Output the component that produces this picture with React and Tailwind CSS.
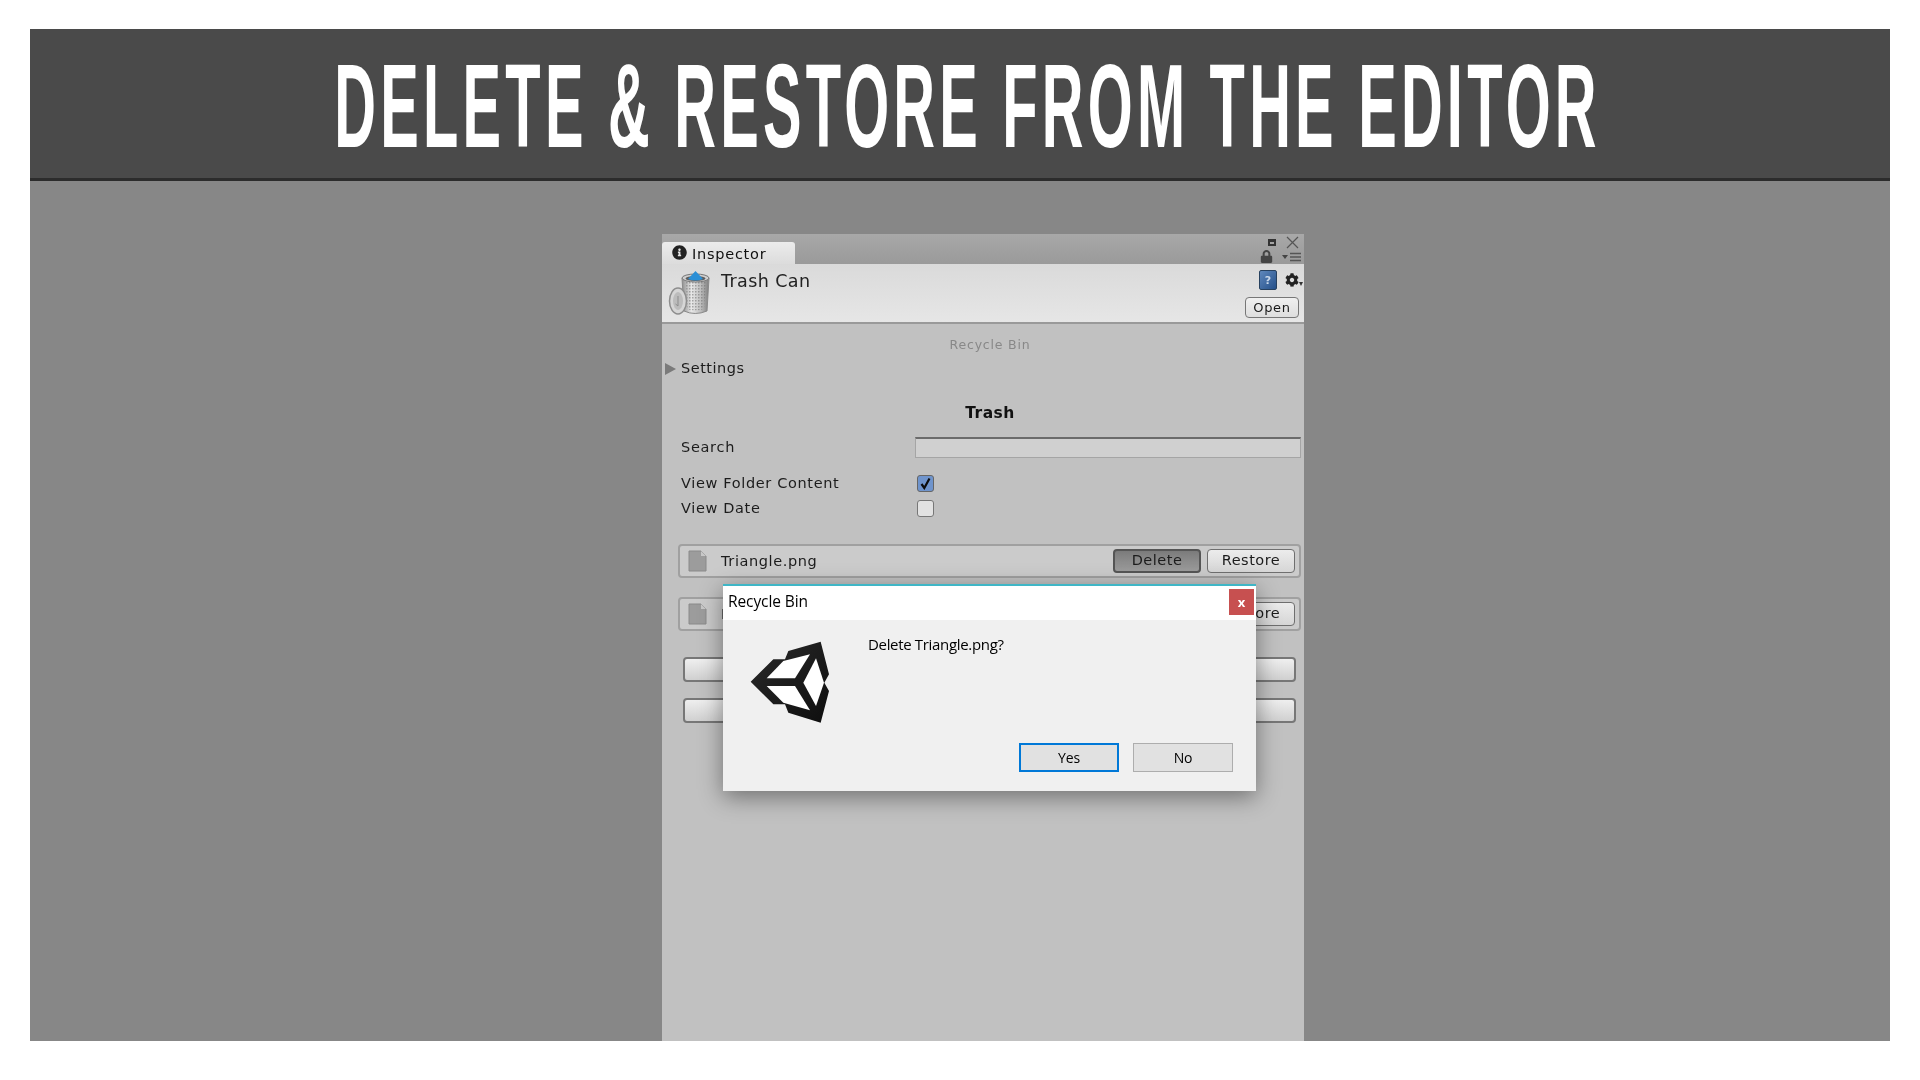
import React from "react";
import { FaCog, FaInfoCircle, FaLock } from "react-icons/fa";

const ui = "font-['DejaVu_Sans',sans-serif]";

function TrashIcon() {
  return (
    <svg width="44" height="46" viewBox="0 0 44 46" className="shrink-0">
      <defs>
        <linearGradient id="can" x1="0" x2="1" y1="0" y2="0">
          <stop offset="0" stopColor="#8f8f8f" />
          <stop offset="0.35" stopColor="#e8e8e8" />
          <stop offset="0.7" stopColor="#bdbdbd" />
          <stop offset="1" stopColor="#7d7d7d" />
        </linearGradient>
        <pattern id="mesh" width="3" height="3" patternUnits="userSpaceOnUse">
          <rect width="3" height="3" fill="none" />
          <rect width="1.5" height="1.5" fill="#6f6f6f" opacity="0.55" />
        </pattern>
      </defs>
      <path d="M14 8 L41 8 L39 41 Q27 46 16 41 Z" fill="url(#can)" stroke="#8a8a8a" />
      <path d="M18 12 L38 12 L36 39 Q27 42 19 39 Z" fill="url(#mesh)" />
      <ellipse cx="27.5" cy="8" rx="13.5" ry="4" fill="#cfcfcf" stroke="#777" />
      <ellipse cx="27.5" cy="8.5" rx="10" ry="2.6" fill="#5d5d5d" />
      <path d="M27.5 1 L35 9 Q27.5 12 20 9 Z" fill="#2b8fd6" />
      <ellipse cx="10" cy="31" rx="8.5" ry="13" fill="#d6d6d6" stroke="#8d8d8d" strokeWidth="1.5" />
      <ellipse cx="10" cy="31" rx="5" ry="9" fill="#bcbcbc" />
      <path d="M10 26 L10 36 L7.5 34" fill="none" stroke="#8d8d8d" />
    </svg>
  );
}

function FileIcon() {
  return (
    <svg width="19" height="22" viewBox="0 0 19 22" className="shrink-0">
      <path d="M1 1 H13 L18 6 V21 H1 Z" fill="#9c9c9c" stroke="#8a8a8a" />
      <path d="M13 1 L13 6 H18 Z" fill="#c8c8c8" />
    </svg>
  );
}

function UnityLogo() {
  return (
    <svg width="130" height="120" viewBox="0 0 390 360" className="shrink-0">
      <defs>
        <linearGradient id="ulogo" x1="0" x2="1" y1="0" y2="1">
          <stop offset="0" stopColor="#2a2a2a" />
          <stop offset="1" stopColor="#0e0e0e" />
        </linearGradient>
      </defs>
      <path
        d="M62 182 L130 115 L165 115 L175 90 L272 62 L297 160 L283 185 L297 210 L272 305 L175 275 L165 250 L130 250 Z"
        fill="url(#ulogo)"
      />
      <path d="M110 172 L195 172 L240 100 L160 120 Z" fill="#fff" />
      <path d="M220 185 L258 112 L282 185 L258 255 Z" fill="#fff" />
      <path d="M110 195 L195 195 L240 268 L160 245 Z" fill="#fff" />
    </svg>
  );
}

function UnityButton({ children, pressed }) {
  return (
    <div
      className={`flex h-[24px] w-[88px] items-center justify-center rounded-[4px] border text-[14.5px] tracking-[0.5px] text-[#1c1c1c] ${
        pressed
          ? "border-[#555] bg-gradient-to-b from-[#7b7b7b] to-[#9c9c9c] border-2"
          : "border-[#6f6f6f] bg-gradient-to-b from-[#ececec] to-[#d6d6d6]"
      }`}
    >
      {children}
    </div>
  );
}

function FileRow({ name, pressed, mt }) {
  return (
    <div
      className={`ml-[16px] flex h-[34px] w-[623px] items-center rounded-[4px] border-2 border-[#a0a0a0] bg-[#cbcbcb] pl-[8px] pr-[4px] ${mt}`}
    >
      <FileIcon />
      <span className="ml-[14px] mt-[1px] text-[14.5px] tracking-[0.6px] text-[#1c1c1c]">{name}</span>
      <div className="ml-auto flex gap-[6px]">
        <UnityButton pressed={pressed}>Delete</UnityButton>
        <UnityButton>Restore</UnityButton>
      </div>
    </div>
  );
}

function Dialog() {
  return (
    <div className="absolute left-[61px] top-[350px] flex h-[207px] w-[533px] flex-col border-t-2 border-[#3fb6c6] bg-[#f0f0f0] font-['Open_Sans',sans-serif] text-black shadow-[0_6px_22px_rgba(0,0,0,0.42)]">
      <div className="flex h-[34px] items-start justify-between bg-white">
        <span className="ml-[5px] mt-[3px] text-[15.5px] leading-[24px] tracking-[-0.1px]">Recycle Bin</span>
        <div className="mr-[2px] mt-[3px] flex h-[26px] w-[25px] items-center justify-center bg-[#c75050] text-[13px] font-bold leading-none text-white">
          x
        </div>
      </div>
      <div className="flex h-[123px]">
        <div className="ml-[7px] mt-[1px]">
          <UnityLogo />
        </div>
        <span className="ml-[8px] mt-[14px] text-[15px] leading-[20px] tracking-[-0.33px]">Delete Triangle.png?</span>
      </div>
      <div className="flex justify-end gap-[14px] pr-[23px] text-[14px] tracking-[-0.2px]">
        <div className="flex h-[29px] w-[100px] items-center justify-center border-2 border-[#0078d7] bg-[#e1e1e1]">Yes</div>
        <div className="flex h-[29px] w-[100px] items-center justify-center border border-[#adadad] bg-[#e1e1e1]">No</div>
      </div>
    </div>
  );
}

function Inspector() {
  return (
    <div className={`relative ml-[632px] flex h-[807px] w-[642px] flex-col bg-[#c1c1c1] blur-[0.45px] ${ui}`}>
      {/* tab strip */}
      <div className="flex h-[30px] items-end justify-between bg-gradient-to-b from-[#a8a8a8] to-[#9a9a9a]">
        <div className="flex h-[22px] w-[133px] items-center rounded-t-[3px] bg-gradient-to-b from-[#ececec] to-[#dcdcdc] pl-[10px]">
          <FaInfoCircle className="-mt-[2px] text-[15px] text-[#222]" />
          <span className="ml-[5px] mt-[4px] text-[14.5px] tracking-[0.75px] text-[#111]">Inspector</span>
        </div>
        <div className="mr-[3px] flex flex-col items-end pb-[1px]">
          <div className="flex items-center gap-[10px] pr-[2px]">
            <div className="h-[7px] w-[8px] border-2 border-t-[3px] border-[#333]" />
            <svg width="13" height="13" viewBox="0 0 13 13">
              <path d="M1 1 L12 12 M12 1 L1 12" stroke="#555" strokeWidth="1.2" fill="none" />
            </svg>
          </div>
          <div className="mt-[1px] flex items-center gap-[9px]">
            <FaLock className="text-[13px] text-[#444]" />
            <svg width="19" height="10" viewBox="0 0 19 10">
              <path d="M0 3 H6 L3 7 Z" fill="#444" />
              <path d="M8 1.5 H19 M8 5 H19 M8 8.5 H19" stroke="#555" strokeWidth="1.3" />
            </svg>
          </div>
        </div>
      </div>

      {/* object header */}
      <div className="flex h-[60px] border-b-2 border-[#999] bg-gradient-to-b from-[#dadada] to-[#e6e6e6] pl-[6px] pr-[5px]">
        <div className="mt-[6px]">
          <TrashIcon />
        </div>
        <span className="ml-[9px] mt-[5px] text-[17.5px] leading-[24px] tracking-[0.4px] text-[#222]">Trash Can</span>
        <div className="ml-auto flex flex-col items-end">
          <div className="-mr-[4px] mt-[6px] flex items-center gap-[8px]">
            <div className="flex h-[20px] w-[18px] items-center justify-center rounded-[2px] border border-[#27415f] bg-gradient-to-br from-[#5f88bc] to-[#24508a] text-[11px] font-bold leading-none text-[#c9d8ea]">
              ?
            </div>
            <div className="flex items-end">
              <FaCog className="text-[14px] text-[#222]" />
              <div className="mb-[1px] h-0 w-0 border-x-[2.5px] border-t-[4px] border-x-transparent border-t-[#333]" />
            </div>
          </div>
          <div className="mt-[7px] flex h-[21px] w-[54px] items-center justify-center rounded-[4px] border border-[#777] bg-gradient-to-b from-[#f0f0f0] to-[#dedede] text-[13px] tracking-[0.7px] text-[#1a1a1a]">
            Open
          </div>
        </div>
      </div>

      {/* body */}
      <div className="mt-[9px] flex h-[24px] items-center justify-center pl-[14px] text-[12.5px] tracking-[0.8px] text-[#888]">Recycle Bin</div>
      <div className="flex h-[24px] items-center pl-[3px]">
        <div className="h-0 w-0 border-y-[6px] border-l-[11px] border-y-transparent border-l-[#7a7a7a]" />
        <span className="ml-[5px] text-[14.5px] tracking-[0.5px] text-[#1c1c1c]">Settings</span>
      </div>
      <div className="mt-[21px] flex h-[24px] items-center justify-center pl-[14px] text-[15.5px] font-bold tracking-[0.5px] text-[#111]">Trash</div>
      <div className="mt-[11px] flex h-[21px] items-center pl-[19px]">
        <span className="w-[234px] text-[14.5px] tracking-[0.7px] text-[#1c1c1c]">Search</span>
        <div className="h-[21px] w-[386px] border border-[#a5a5a5] border-t-2 border-t-[#6b6b6b] bg-[#d0d0d0]" />
      </div>
      <div className="mt-[17px] flex h-[17px] items-center pl-[19px]">
        <span className="w-[236px] text-[14.5px] tracking-[0.65px] text-[#1c1c1c]">View Folder Content</span>
        <div className="flex h-[17px] w-[17px] items-center justify-center rounded-[3px] border border-[#666] bg-[#6f94cc]">
          <svg width="13" height="13" viewBox="0 0 13 13">
            <path d="M2.5 7 L5.3 11 L10.5 1.5" fill="none" stroke="#0c0c0c" strokeWidth="2.2" />
          </svg>
        </div>
      </div>
      <div className="mt-[8px] flex h-[17px] items-center pl-[19px]">
        <span className="w-[236px] text-[14.5px] tracking-[0.65px] text-[#1c1c1c]">View Date</span>
        <div className="h-[17px] w-[17px] rounded-[3px] border border-[#777] bg-[#e2e2e2]" />
      </div>

      <FileRow name="Triangle.png" pressed mt="mt-[27px]" />
      <FileRow name="Image.png" mt="mt-[19px]" />
      <div className="ml-[21px] mt-[26px] h-[25px] w-[613px] rounded-[4px] border-2 border-[#777] bg-gradient-to-b from-[#efefef] to-[#d0d0d0]" />
      <div className="ml-[21px] mt-[16px] h-[25px] w-[613px] rounded-[4px] border-2 border-[#777] bg-gradient-to-b from-[#efefef] to-[#d0d0d0]" />

      <Dialog />
    </div>
  );
}

export default function App() {
  return (
    <div className="h-[1080px] w-[1920px] overflow-hidden bg-white px-[30px] pt-[29px]">
      <div className="flex h-[152px] items-center justify-center overflow-hidden border-b-[3px] border-[#2c2c2c] bg-[#4a4a4a] pl-[15px] pt-[3px]">
        <h1 className="origin-center scale-x-[0.485] whitespace-nowrap font-['Liberation_Sans',sans-serif] text-[119px] font-bold leading-none tracking-[8.8px] text-white">
          DELETE &amp; RESTORE FROM THE EDITOR
        </h1>
      </div>
      <div className="h-[860px] bg-[#878787] pt-[53px]">
        <Inspector />
      </div>
    </div>
  );
}
